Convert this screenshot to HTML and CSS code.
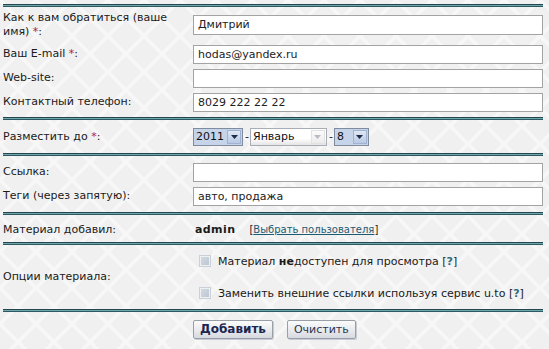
FILE: index.html
```html
<!DOCTYPE html>
<html lang="ru">
<head>
<meta charset="utf-8">
<title>Форма</title>
<link rel="stylesheet" href="styles.css">
</head>
<body>
<div class="page">
  <div class="sep"></div>
  <div class="sec sec-a">
    <div class="row row-tall">
      <div class="lbl"><span class="ln">Как к вам обратиться (ваше</span><span class="ln">имя) <span class="req">*</span>:</span></div>
      <div class="fld"><div class="inp">Дмитрий</div></div>
    </div>
    <div class="row">
      <div class="lbl">Ваш E-mail <span class="req">*</span>:</div>
      <div class="fld"><div class="inp">hodas@yandex.ru</div></div>
    </div>
    <div class="row">
      <div class="lbl">Web-site:</div>
      <div class="fld"><div class="inp"></div></div>
    </div>
    <div class="row">
      <div class="lbl">Контактный телефон:</div>
      <div class="fld"><div class="inp">8029 222 22 22</div></div>
    </div>
  </div>
  <div class="sep"></div>
  <div class="sec sec-b">
    <div class="row row-date">
      <div class="lbl">Разместить до <span class="req">*</span>:</div>
      <div class="fld dates">
        <span class="sel sel-blue sel-year"><span class="sv">2011</span><span class="arr"><svg width="7" height="4" viewBox="0 0 7 4"><path d="M0 0h7L3.5 4z" fill="#1c2b4a"/></svg></span></span>
        <span class="dash">-</span>
        <span class="sel sel-month"><span class="sv">Январь</span><span class="arr arr-off"><svg width="7" height="4" viewBox="0 0 7 4"><path d="M0 0h7L3.5 4z" fill="#b8bcc4"/></svg></span></span>
        <span class="dash">-</span>
        <span class="sel sel-blue sel-day"><span class="sv">8</span><span class="arr"><svg width="7" height="4" viewBox="0 0 7 4"><path d="M0 0h7L3.5 4z" fill="#1c2b4a"/></svg></span></span>
      </div>
    </div>
  </div>
  <div class="sep"></div>
  <div class="sec sec-c">
    <div class="row">
      <div class="lbl">Ссылка:</div>
      <div class="fld"><div class="inp"></div></div>
    </div>
    <div class="row">
      <div class="lbl">Теги (через запятую):</div>
      <div class="fld"><div class="inp">авто, продажа</div></div>
    </div>
  </div>
  <div class="sep"></div>
  <div class="sec sec-d">
    <div class="row row-user">
      <div class="lbl">Материал добавил:</div>
      <div class="fld user"><b class="admin">admin</b><span class="pick">[<a href="#" class="plink">Выбрать пользователя</a>]</span></div>
    </div>
  </div>
  <div class="sep"></div>
  <div class="sec sec-e">
    <div class="row row-opts">
      <div class="lbl">Опции материала:</div>
      <div class="fld opts">
        <div class="opt"><span class="cb"></span><span>Материал <b>не</b>доступен для просмотра [<b class="q">?</b>]</span></div>
        <div class="opt"><span class="cb"></span><span>Заменить внешние ссылки используя сервис u.to [<b class="q">?</b>]</span></div>
      </div>
    </div>
  </div>
  <div class="sep"></div>
  <div class="sec sec-f">
    <div class="btns">
      <span class="btn btn-main">Добавить</span>
      <span class="btn">Очистить</span>
    </div>
  </div>
</div>
</body>
</html>
```
FILE: styles.css
```css
html, body {
  margin: 0;
  padding: 0;
}
body {
  width: 549px;
  height: 349px;
  overflow: hidden;
  font-family: "DejaVu Sans", Verdana, sans-serif;
  font-size: 11px;
  color: #1a1a1a;
  background-color: #f0f0f0;
  background-image:
    linear-gradient(45deg, transparent 46%, #f7f7f7 46%, #f7f7f7 54%, transparent 54%),
    linear-gradient(-45deg, transparent 46%, #f7f7f7 46%, #f7f7f7 54%, transparent 54%);
  background-size: 36px 36px;
}
.page {
  padding: 4px 6px 0 3px;
}
.sep {
  height: 1px;
  border-top: 1px solid #23464f;
  border-bottom: 1px solid #2c5962;
  background: #6fa7ad;
}
.row {
  display: grid;
  grid-template-columns: 190px 1fr;
  align-items: center;
  height: 24px;
}
.row-tall {
  height: 35px;
}
.lbl {
  line-height: 14px;
  padding-right: 20px;
}
.ln {
  display: block;
  line-height: 14px;
  white-space: nowrap;
}
.req {
  color: #b0203a;
}
.inp {
  height: 17px;
  border: 1px solid #a3a3a3;
  background: #fff;
  padding: 0 4px;
  line-height: 17px;
  color: #222;
}
.row-tall .inp {
  height: 18px;
  line-height: 18px;
}
.sec-a {
  padding: 0 0 3px;
}
.sec-b .row-date {
  height: 33px;
}
.sec-c {
  padding: 4px 0 4px;
}
.sec-d .row-user {
  height: 27px;
  padding-top: 2px;
  box-sizing: border-box;
}
.sec-e .row-opts {
  height: 64px;
}
.dates {
  display: flex;
  align-items: center;
}
.sel {
  display: flex;
  align-items: center;
  height: 16px;
  border: 1px solid #7f8ca0;
  box-sizing: content-box;
}
.sel-blue {
  background: #c6d4ea;
}
.sel-year {
  width: 48px;
}
.sel-month {
  width: 75px;
  background: linear-gradient(#ffffff, #ffffff 60%, #e4e4e4);
  border-color: #a8adb5;
}
.sel-day {
  width: 33px;
}
.sv {
  flex: 1;
  padding-left: 2px;
  line-height: 16px;
  color: #111;
}
.arr {
  width: 14px;
  height: 14px;
  margin-right: 1px;
  display: flex;
  align-items: center;
  justify-content: center;
  background: linear-gradient(#dfe7f4, #b9c9e4);
  border: 1px solid #9fb2d2;
  box-sizing: border-box;
}
.arr-off {
  background: linear-gradient(#fbfbfb, #ececec);
  border-color: #e2e2e2;
}
.dash {
  padding: 0 1px 0 2px;
}
.user {
  display: flex;
  align-items: baseline;
  padding-left: 2px;
}
.admin {
  font-size: 11px;
  letter-spacing: 0.4px;
  margin-right: 14px;
}
.pick {
  font-size: 10px;
  color: #222;
}
.plink {
  color: #1d5b73;
  text-decoration: underline;
}
.opts {
  display: flex;
  flex-direction: column;
}
.opt {
  height: 32px;
  display: flex;
  align-items: center;
  padding-left: 6px;
}
.cb {
  width: 10px;
  height: 10px;
  border: 1px solid #c9d0d8;
  background: linear-gradient(135deg, #d7dde5, #b9c3cf);
  box-shadow: inset 0 0 0 1px #eef1f4;
  margin-right: 7px;
  flex: none;
}
.q {
  color: #2a6f82;
}
.btns {
  display: flex;
  padding: 8px 0 0 190px;
  gap: 14px;
}
.btn {
  display: inline-block;
  height: 17px;
  line-height: 17px;
  border: 1px solid #9a9ea6;
  border-radius: 2px;
  background: linear-gradient(#fbfbfb, #e6e8ec 60%, #d6d9df);
  color: #2b3550;
  padding: 0 6px;
  box-shadow: 1px 1px 0 #c6ccd6;
}
.btn-main {
  font-weight: bold;
  font-size: 12px;
  color: #1c2750;
  padding: 0 6px;
}
```
